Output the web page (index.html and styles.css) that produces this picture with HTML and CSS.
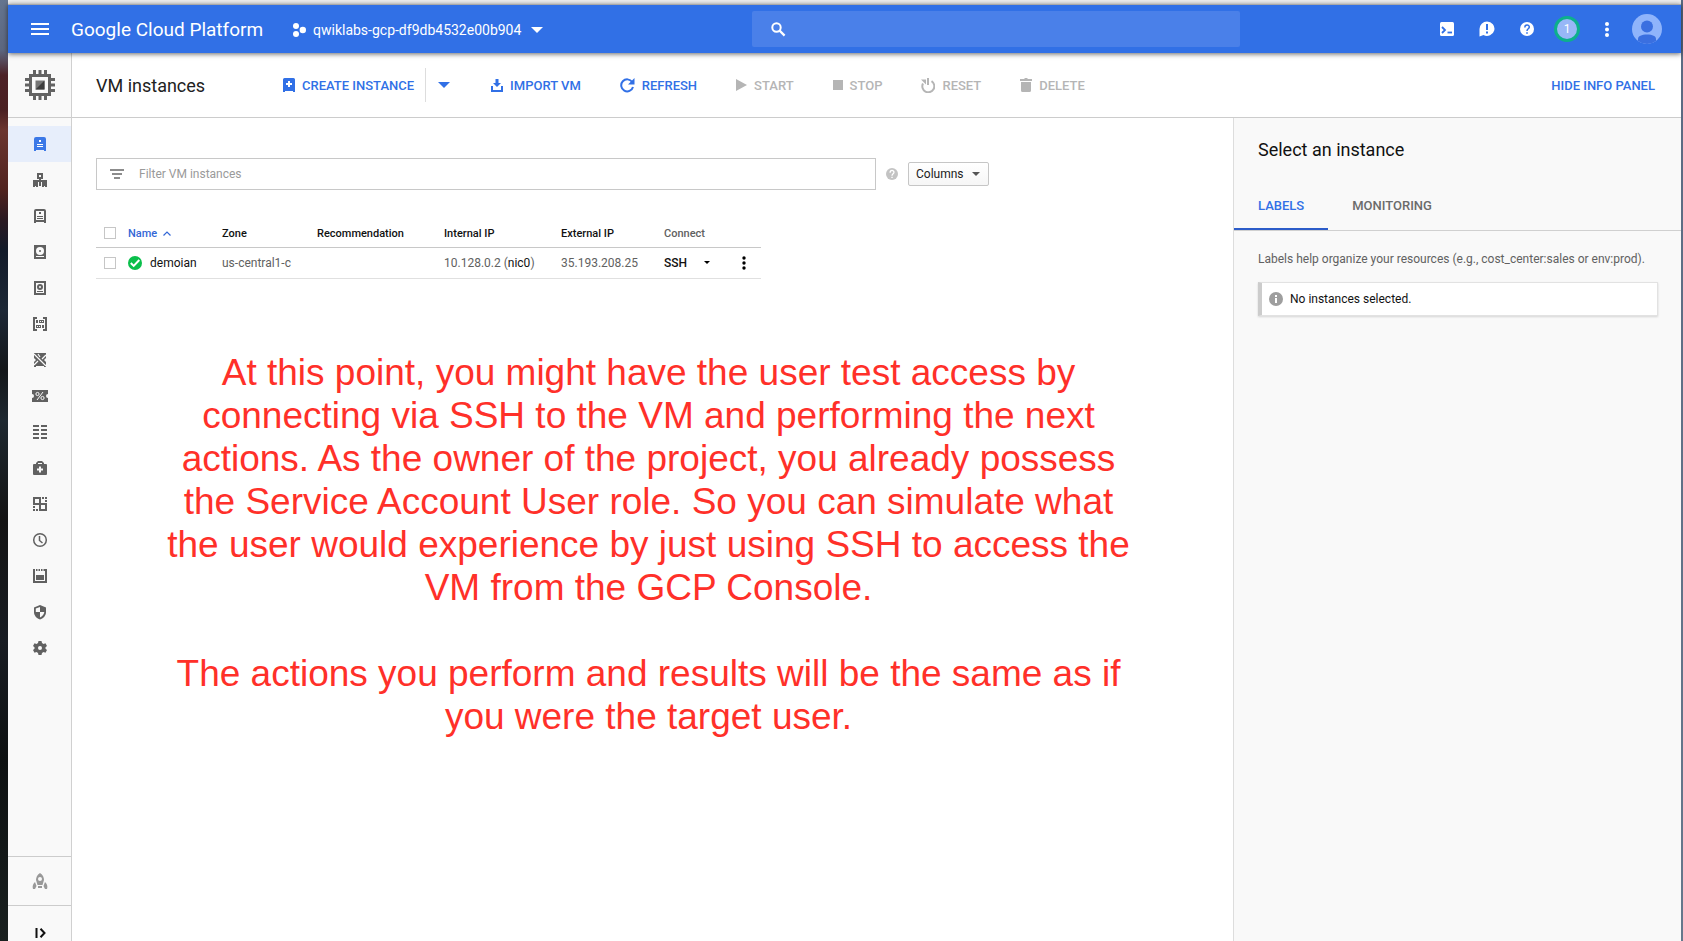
FILE: index.html
```html
<!DOCTYPE html>
<html lang="en">
<head>
<meta charset="utf-8">
<title>VM instances</title>
<link rel="stylesheet" href="styles.css">
</head>
<body>
<div class="desktop">
<div class="window">
  <header class="topbar">
    <button class="icon-btn menu-btn" aria-label="Menu"><svg width="18" height="12" viewBox="0 0 18 12"><path fill="#fff" d="M0 0h18v2H0zM0 5h18v2H0zM0 10h18v2H0z"/></svg></button>
    <a class="brand" href="#">Google Cloud Platform</a>
    <button class="project">
      <svg width="14" height="14" viewBox="0 0 14 14" fill="#fff"><circle cx="4" cy="3" r="3"/><circle cx="4" cy="11" r="3"/><circle cx="10.8" cy="7" r="3.2"/></svg>
      <span>qwiklabs-gcp-df9db4532e00b904</span>
      <svg class="project-caret" width="12" height="6" viewBox="0 0 12 6"><path fill="#fff" d="M0 0h12L6 6z"/></svg>
    </button>
    <label class="search">
      <svg width="15" height="15" viewBox="0 0 15 15"><circle cx="5.5" cy="5.5" r="4.2" fill="none" stroke="#fff" stroke-width="2"/><path d="M8.6 8.6l5 5" stroke="#fff" stroke-width="2.2"/></svg>
      <input type="text" aria-label="Search">
    </label>
    <nav class="tools">
      <button class="icon-btn" aria-label="Cloud Shell"><svg width="14" height="14" viewBox="0 0 14 14"><rect width="14" height="14" rx="1.5" fill="#fff"/><path d="M2 5l3 3-3 3" fill="none" stroke="#3170e6" stroke-width="1.8"/><path d="M7.5 10.5H12" stroke="#3170e6" stroke-width="1.8"/></svg></button>
      <button class="icon-btn" aria-label="Feedback"><svg width="16" height="16" viewBox="0 0 16 16"><path fill="#fff" d="M8 .5a7.500 7.200 0 1 1-3.500 13.600L.5 15.500V8A7.500 7.500 0 0 1 8 .5z"/><path fill="#3170e6" d="M7 3h2v6H7zM7 10.500h2v2H7z"/></svg></button>
      <button class="icon-btn" aria-label="Help"><svg width="14" height="14" viewBox="0 0 14 14"><circle cx="7" cy="7" r="7" fill="#fff"/><path d="M4.800 5.400C4.800 2 9.300 2.200 9.300 5.100 9.300 6.800 7 6.800 7 9" fill="none" stroke="#3170e6" stroke-width="1.500"/><path fill="#3170e6" d="M6.200 10.200h1.600v1.600H6.200z"/></svg></button>
      <button class="icon-btn" aria-label="Notifications"><span class="count">1</span></button>
      <button class="icon-btn" aria-label="More"><svg width="4" height="16" viewBox="0 0 4 16" fill="#fff"><circle cx="2" cy="3" r="2"/><circle cx="2" cy="8.500" r="2"/><circle cx="2" cy="14" r="2"/></svg></button>
      <button class="icon-btn" aria-label="Account"><svg width="30" height="30" viewBox="0 0 30 30"><circle cx="15" cy="15" r="15" fill="#8fb4fb"/><circle cx="15" cy="12.500" r="6" fill="#3a6fe0"/><path fill="#3a6fe0" d="M6 27v-2c0-3 3.500-4.500 9-4.500s9 1.500 9 4.500v2a15 15 0 0 1-18 0z"/></svg></button>
    </nav>
  </header>

  <div class="body">
    <aside class="sidebar">
      <div class="product">
        <svg width="30" height="30" viewBox="0 0 30 30"><path fill="#636363" fill-rule="evenodd" d="M4 4h22v22H4zM7 7v16h16V7z"/><path fill="#636363" d="M8 0h3v4H8zM13.500 0h3v4h-3zM19 0h3v4h-3zM8 26h3v4H8zM13.500 26h3v4h-3zM19 26h3v4h-3zM0 8h4v3H0zM0 13.500h4v3H0zM0 19h4v3H0zM26 8h4v3h-4zM26 13.500h4v3h-4zM26 19h4v3h-4z"/><path fill="#757575" d="M10.500 10.500h9v9h-9z"/><path fill="#3c3c3c" d="M19.500 10.500v9h-9z"/></svg>
      </div>
      <nav class="side-nav">
        <a class="active" href="#" aria-label="VM instances"><svg viewBox="0 0 16 16"><path fill="#3b78e7" d="M4 1h8q2 0 2 2v12h-2v-1H4v1H2V3q0-2 2-2z"/><path fill="#fff" d="M7 4h2v2H7zM5 8h6v1H5zM5 10h6v1H5z"/></svg></a>
        <a href="#" aria-label="Instance groups"><svg viewBox="0 0 16 16"><path fill-rule="evenodd" d="M5 1h6v6H9v1h6v7h-2v-1h-1v1h-2v-5H9v4H7v-4H6v5H4v-1H3v1H1V8h6V7H5zM7 3v2h2V3z"/></svg></a>
        <a href="#" aria-label="Instance templates"><svg viewBox="0 0 16 16"><path fill-rule="evenodd" d="M4 1h8q2 0 2 2v12h-2v-1H4v1H2V3q0-2 2-2zM4 3v9h8V3z"/><path d="M7 4h2v2H7zM5 8h6v1H5zM5 10h6v1H5z"/></svg></a>
        <a href="#" aria-label="Disks"><svg viewBox="0 0 16 16"><path d="M2 1h12v14H2z"/><circle cx="8" cy="7" r="4" fill="#fafafa"/><circle cx="8" cy="7" r="1"/><path fill="#fafafa" d="M4 12h8v1H4z"/></svg></a>
        <a href="#" aria-label="Snapshots"><svg viewBox="0 0 16 16"><path fill-rule="evenodd" d="M2 1h12v14H2zM4 3v10h8V3z"/><circle cx="8" cy="7" r="3"/><circle cx="8" cy="7" r="1" fill="#fafafa"/><path d="M5 11h6v1H5z"/></svg></a>
        <a href="#" aria-label="Images"><svg viewBox="0 0 16 16"><path d="M1 1h4v2H3v10h2v2H1zM15 1h-4v2h2v10h-2v2h4zM4 4h2v3H4zM10 9h2v3h-2z"/><path fill-rule="evenodd" d="M7 4h5v3H7zM8 5v1h1V5zM10 5v1h1V5zM4 9h5v3H4zM5 10v1h1v-1zM7 10v1h1v-1z"/></svg></a>
        <a href="#" aria-label="TPUs"><svg viewBox="0 0 16 16"><path d="M2 1h12v5l-2 2 2 2v5h-2v-1H4v1H2v-5l2-2-2-2z"/><path stroke="#fafafa" stroke-width="1.200" d="M2 2l12 12M14 3l-4 4M6 9l-4 4M6 2l2 3"/></svg></a>
        <a href="#" aria-label="Committed use discounts"><svg viewBox="0 0 16 16"><path d="M0 2h16v4a2 2 0 0 0 0 4v4H0v-4a2 2 0 0 0 0-4z"/><g fill="none" stroke="#fafafa"><circle cx="5.500" cy="6" r="1.600"/><circle cx="10.500" cy="10" r="1.600"/><path d="M11 4l-6 8"/></g></svg></a>
        <a href="#" aria-label="Metadata"><svg viewBox="0 0 16 16"><path d="M1 1h6v2H1zM9 1h6v2H9zM1 5h6v2H1zM9 5h6v2H9zM1 9h6v2H1zM9 9h6v2H9zM1 13h6v2H1zM9 13h6v2H9z"/></svg></a>
        <a href="#" aria-label="Health checks"><svg viewBox="0 0 16 16"><path fill-rule="evenodd" d="M4 4V3l2-2h4l2 2v1h2q1 0 1 1v9q0 1-1 1H2q-1 0-1-1V5q0-1 1-1zM6 4h4V3H6zM7 6.500v2H5v2h2v2h2v-2h2v-2H9v-2z"/></svg></a>
        <a href="#" aria-label="Zones"><svg viewBox="0 0 16 16"><path fill-rule="evenodd" d="M1 1h8v6h6v8H7V9H1zM3 3v4h4V3zM9 9v4h4V9z"/><path d="M10 1h2v2h-2zM13 1h2v2h-2zM13 4h2v2h-2zM1 10h2v2H1zM1 13h2v2H1zM4 13h2v2H4z"/></svg></a>
        <a href="#" aria-label="Operations"><svg viewBox="0 0 16 16"><circle cx="8" cy="8" r="6.300" fill="none" stroke="#616161" stroke-width="1.500"/><path d="M7.500 4v4.500l3 2.500" fill="none" stroke="#616161" stroke-width="1.500"/></svg></a>
        <a href="#" aria-label="Sole tenants"><svg viewBox="0 0 16 16"><path d="M1 1h2v12h10V1h2v14H1zM4 7h8v5H4zM4 1h1.500v2H4zM6.500 1H8v2H6.500zM9 1h1.500v2H9zM11.500 1H13v2h-1.500z"/></svg></a>
        <a href="#" aria-label="Security scans"><svg viewBox="0 0 16 16"><path d="M8 1l6 2.500V8c0 4-3 6.500-6 7.500C5 14.500 2 12 2 8V3.500z"/><path fill="#fafafa" d="M8 3v5h4.300c-.3 2.500-2 4.500-4.300 5.500V8H3.800V4.500z"/></svg></a>
        <a href="#" aria-label="Settings"><svg viewBox="0 0 16 16"><path fill-rule="evenodd" d="M6.500 1h3l.5 2 1.500.9 2-.6 1.500 2.600L13.500 7.300v1.400L15 10.100l-1.500 2.600-2-.6L10 13l-.5 2h-3L6 13l-1.500-.9-2 .6L1 10.100l1.500-1.400V7.300L1 5.900l1.500-2.600 2 .6L6 3zM8 6a2 2 0 1 0 0 4 2 2 0 0 0 0-4z"/></svg></a>
      </nav>
      <div class="side-foot">
        <a class="launcher" href="#" aria-label="Marketplace"><svg viewBox="0 0 16 16"><path fill="#999" fill-rule="evenodd" d="M8 0c3 2 4 4.500 4 7l-1.500 5h-5L4 7c0-2.500 1-5 4-7zM8 4a2 2 0 1 0 0 4 2 2 0 0 0 0-4zM3 9l1.500 4L3 16H1c-1-3 0-5 2-7zM13 9l-1.500 4 1.500 3h2c1-3 0-5-2-7zM6 13h4v2H6z"/></svg></a>
        <button class="expand" aria-label="Expand"><svg width="12" height="10" viewBox="0 0 12 10"><path d="M1.500 0v10M5.500 .8L9.500 5l-4 4.200" fill="none" stroke="#111" stroke-width="2"/></svg></button>
      </div>
    </aside>

    <div class="page">
      <div class="actionbar">
        <h1>VM instances</h1>
        <button class="action create"><svg width="12" height="14" viewBox="0 0 12 14"><path fill="#3170e6" d="M1.500 0h9Q12 0 12 1.500V14h-2v-1H2v1H0V1.500Q0 0 1.500 0z"/><path fill="#fff" d="M5 3h2v2h2v2H7v2H5V7H3V5h2z"/></svg>CREATE INSTANCE</button>
        <button class="create-more" aria-label="More create options"><svg width="12" height="6" viewBox="0 0 12 6"><path fill="#3170e6" d="M0 0h12L6 6z"/></svg></button>
        <button class="action import"><svg width="12" height="14" viewBox="0 0 12 14"><path fill="#3170e6" d="M4.500 1h3v4H10L6 9 2 5h2.500zM0 8h2v4h8V8h2v6H0z"/></svg>IMPORT VM</button>
        <button class="action refresh"><svg width="15" height="15" viewBox="0 0 15 15"><path d="M12.200 4A6 6 0 1 0 13 9" fill="none" stroke="#3170e6" stroke-width="2"/><path fill="#3170e6" d="M14.500 0v6.500H8z"/></svg>REFRESH</button>
        <button class="action start" disabled><svg width="11" height="12" viewBox="0 0 11 12"><path fill="#b5b5b5" d="M0 0l11 6-11 6z"/></svg>START</button>
        <button class="action stop" disabled><svg width="10" height="10" viewBox="0 0 10 10"><path fill="#b5b5b5" d="M0 0h10v10H0z"/></svg>STOP</button>
        <button class="action reset" disabled><svg width="14" height="15" viewBox="0 0 14 15"><path d="M10.500 3.200A6 6 0 1 1 2 5.500" fill="none" stroke="#b5b5b5" stroke-width="2"/><path fill="#b5b5b5" d="M6 0h2v7H6zM0 1.500h5v5z"/></svg>RESET</button>
        <button class="action delete" disabled><svg width="12" height="14" viewBox="0 0 12 14"><path fill="#b5b5b5" d="M0 1h4l1-1h2l1 1h4v2H0zM1 4h10v8.500Q11 14 9.500 14h-7Q1 14 1 12.500z"/></svg>DELETE</button>
        <button class="action hide-info">HIDE INFO PANEL</button>
      </div>

      <div class="content">
        <main class="main">
          <div class="filters">
            <label class="filter"><svg width="14" height="10" viewBox="0 0 14 10"><path fill="#8c8c8c" d="M0 0h14v2H0zM2 4h10v2H2zM4 8h6v2H4z"/></svg><input type="text" placeholder="Filter VM instances" aria-label="Filter VM instances"></label>
            <button class="filter-help" aria-label="Filter help"><svg width="12" height="12" viewBox="0 0 14 14"><circle cx="7" cy="7" r="7" fill="#c3c3c3"/><path d="M4.800 5.400C4.800 2 9.300 2.200 9.300 5.100 9.300 6.800 7 6.800 7 9" fill="none" stroke="#fff" stroke-width="1.500"/><path fill="#fff" d="M6.200 10.200h1.600v1.600H6.200z"/></svg></button>
            <button class="columns">Columns<svg width="8" height="4" viewBox="0 0 8 4"><path fill="#555" d="M0 0h8L4 4z"/></svg></button>
          </div>
          <table class="instances">
            <colgroup><col class="c-check"><col class="c-name"><col class="c-zone"><col class="c-rec"><col class="c-int"><col class="c-ext"><col class="c-conn"></colgroup>
            <thead>
              <tr><th class="check"><input type="checkbox" aria-label="Select all"></th><th class="sorted">Name <svg width="8" height="5" viewBox="0 0 8 5"><path d="M.5 4.500L4 1l3.500 3.500" fill="none" stroke="#3367d6" stroke-width="1.200"/></svg></th><th>Zone</th><th>Recommendation</th><th>Internal IP</th><th>External IP</th><th class="plain">Connect</th></tr>
            </thead>
            <tbody>
              <tr><td class="check"><input type="checkbox" aria-label="Select demoian"></td><td><div class="name-cell"><svg width="14" height="14" viewBox="0 0 14 14"><circle cx="7" cy="7" r="7" fill="#0abf4b"/><path d="M2.800 7l2.900 2.900L11.300 4" fill="none" stroke="#fff" stroke-width="2"/></svg><a href="#">demoian</a></div></td><td>us-central1-c</td><td></td><td>10.128.0.2 (<a href="#">nic0</a>)</td><td>35.193.208.25</td><td><div class="connect"><button class="ssh">SSH</button><button class="ssh-more" aria-label="SSH options"><svg width="6" height="3" viewBox="0 0 6 3"><path d="M0 0h6L3 3z"/></svg></button><button class="row-more" aria-label="Row actions"><svg width="4" height="14" viewBox="0 0 4 14"><circle cx="2" cy="2" r="1.700"/><circle cx="2" cy="7" r="1.700"/><circle cx="2" cy="12" r="1.700"/></svg></button></div></td></tr>
            </tbody>
          </table>
          <div class="note">
            <p>At this point, you might have the user test access by<br>connecting via SSH to the VM and performing the next<br>actions. As the owner of the project, you already possess<br>the Service Account User role. So you can simulate what<br>the user would experience by just using SSH to access the<br>VM from the GCP Console.</p>
            <p>The actions you perform and results will be the same as if<br>you were the target user.</p>
          </div>
        </main>
        <aside class="info">
          <h2>Select an instance</h2>
          <div class="tabs"><button class="tab selected">LABELS</button><button class="tab">MONITORING</button></div>
          <p class="help">Labels help organize your resources (e.g., cost_center:sales or env:prod).</p>
          <div class="message"><svg width="14" height="14" viewBox="0 0 14 14"><circle cx="7" cy="7" r="7" fill="#9e9e9e"/><path fill="#fff" d="M6 3h2v2H6zM6 6h2v5H6z"/></svg>No instances selected.</div>
        </aside>
      </div>
    </div>
  </div>
</div>
</div>
</body>
</html>
```
FILE: styles.css
```css
* { box-sizing: border-box; }
body { margin: 0; font-family: Roboto, "Liberation Sans", sans-serif; font-size: 12px; color: #212121; }
button, input { font: inherit; color: inherit; margin: 0; }
button { padding: 0; border: 0; background: none; white-space: nowrap; }
a { color: inherit; text-decoration: none; }
svg { display: block; flex: none; }
h1, h2, p { margin: 0; font-weight: 400; }

.desktop {
  min-height: 100vh;
  display: flex;
  padding: 0 2px 0 8px;
  background:
    linear-gradient(#5a6a82, #66788c) right / 2px 100% no-repeat,
    linear-gradient(#65758f 0, #5d6780 50px, #4d2227 75px, #4a2022 110px, #6b352f 130px, #50231f 190px, #2a1a22 220px, #131b2a 250px, #1d2836 310px, #14171a 370px, #1e2830 420px, #141414 520px, #181c22 640px, #0e1112 760px, #19201f 941px);
}
.window { flex: 1; display: flex; flex-direction: column; border-top: 4px solid #eee; background: #fff; }

.topbar { position: relative; z-index: 1; height: 49px; display: flex; align-items: center; background: #3170e6; border-top: 1px solid #a8a8a8; box-shadow: 0 1px 5px rgba(0, 0, 0, .6); color: #fff; }
.icon-btn { width: 40px; height: 40px; display: flex; align-items: center; justify-content: center; }
.menu-btn { margin-left: 12px; }
.brand { margin-left: 11px; width: 221px; font-size: 19px; white-space: nowrap; }
.project { display: flex; align-items: center; gap: 7px; padding-top: 2px; font-size: 14px; }
.project-caret { margin-left: 3px; }
.search { width: 488px; height: 36px; margin-left: auto; display: flex; align-items: center; padding-left: 19px; border-radius: 2px; background: #4a80e9; }
.search input { flex: 1; border: 0; background: none; outline: 0; }
.tools { display: flex; margin-left: 187px; margin-right: 14px; }
.count { width: 26px; height: 26px; border: 3px solid #0cb08c; border-radius: 50%; background: #98b7f7; font-size: 12px; line-height: 20px; text-align: center; }

.body { flex: 1; display: flex; }
.sidebar { width: 64px; display: flex; flex-direction: column; background: #f9f9f9; border-right: 1px solid #d0d0d0; }
.product { height: 65px; display: flex; align-items: center; justify-content: center; border-bottom: 1px solid #ccc; }
.side-nav { padding-top: 8px; }
.side-nav a { height: 36px; display: flex; align-items: center; justify-content: center; }
.side-nav a.active { background: #e7eefb; }
.side-nav svg, .launcher svg { width: 16px; height: 16px; fill: #616161; }
.side-foot { margin-top: auto; }
.launcher { height: 49px; display: flex; align-items: center; justify-content: center; border-top: 1px solid #ccc; }
.expand { width: 100%; height: 36px; padding: 18px 0 0 2px; display: flex; align-items: center; justify-content: center; border-top: 1px solid #ccc; }

.page { flex: 1; min-width: 0; display: flex; flex-direction: column; }
.actionbar { height: 65px; display: flex; align-items: center; padding: 0 26px 0 24px; border-bottom: 1px solid #ccc; }
h1 { width: 187px; font-size: 18px; }
.action { display: flex; align-items: center; gap: 7px; font-size: 13px; font-weight: 500; color: #3170e6; }
.action:disabled { color: #b5b5b5; }
.create-more { height: 34px; margin-left: 11px; padding-left: 12px; border-left: 1px solid #ddd; }
.import { margin-left: 41px; }
.refresh, .start, .stop, .reset, .delete { margin-left: 39px; }
.hide-info { margin-left: auto; }

.content { flex: 1; display: flex; }
.main { flex: 1; min-width: 0; padding: 40px 24px 0; }
.filters { display: flex; align-items: center; }
.filter { width: 780px; height: 32px; display: flex; align-items: center; gap: 15px; padding-left: 13px; border: 1px solid #c8c8c8; }
.filter input { flex: 1; padding: 0; border: 0; outline: 0; background: none; }
.filter input::placeholder { color: #9a9a9a; }
.filter-help { margin: 0 10px; }
.columns { width: 81px; height: 24px; display: flex; align-items: center; justify-content: space-between; padding: 0 8px 0 7px; border: 1px solid #c6c6c6; border-radius: 2px; background: linear-gradient(#fff, #f6f6f6); }

.instances { width: 665px; margin-top: 30px; border-collapse: collapse; table-layout: fixed; }
.c-check { width: 32px; }
.c-name { width: 94px; }
.c-zone { width: 95px; }
.c-rec { width: 127px; }
.c-int { width: 117px; }
.c-ext { width: 103px; }
.instances th, .instances td { padding: 0; text-align: left; white-space: nowrap; }
.instances th { height: 27px; font-size: 11px; font-weight: 500; color: #111; border-bottom: 1px solid #c8c8c8; }
.instances td { height: 31px; color: #616161; border-bottom: 1px solid #e0e0e0; }
.instances .check { padding-left: 8px; }
.instances a { color: #111; }
.instances .sorted { color: #3367d6; }
.sorted svg { display: inline-block; vertical-align: 1px; margin-left: 3px; }
.instances .plain { color: #616161; }
.instances input { display: block; appearance: none; width: 12px; height: 12px; border: 1px solid #c6c6c6; background: #fff; }
.name-cell { display: flex; align-items: center; gap: 8px; }
.connect { display: flex; align-items: center; color: #111; }
.ssh { width: 40px; font-weight: 500; text-align: left; }
.ssh-more { width: 36px; }
.row-more { width: 8px; display: flex; justify-content: center; }

.note { margin-top: 72px; padding-right: 8px; font: 37px/43px "Liberation Sans", Arial, sans-serif; color: #ff3029; text-align: center; white-space: nowrap; }
.note p + p { margin-top: 43px; }

.info { width: 448px; background: #f9f9f9; border-left: 1px solid #ddd; }
h2 { padding: 21px 24px 0; font-size: 18px; line-height: 22px; color: #111; }
.tabs { display: flex; margin-top: 19px; height: 51px; border-bottom: 1px solid #d0d0d0; }
.tab { padding: 2px 24px 0; font-size: 13px; font-weight: 500; color: #6b6b6b; border-bottom: 2px solid transparent; }
.tab.selected { color: #3170e6; border-bottom-color: #2c5cc9; }
.help { padding: 19px 0 0 24px; line-height: 18px; color: #616161; white-space: nowrap; }
.message { margin: 14px 23px 0 24px; height: 34px; display: flex; align-items: center; gap: 7px; padding-left: 7px; border: 1px solid #e2e2e2; border-left: 4px solid #ccc; background: #fff; box-shadow: 0 1px 2px rgba(0, 0, 0, .15); color: #111; }
```
